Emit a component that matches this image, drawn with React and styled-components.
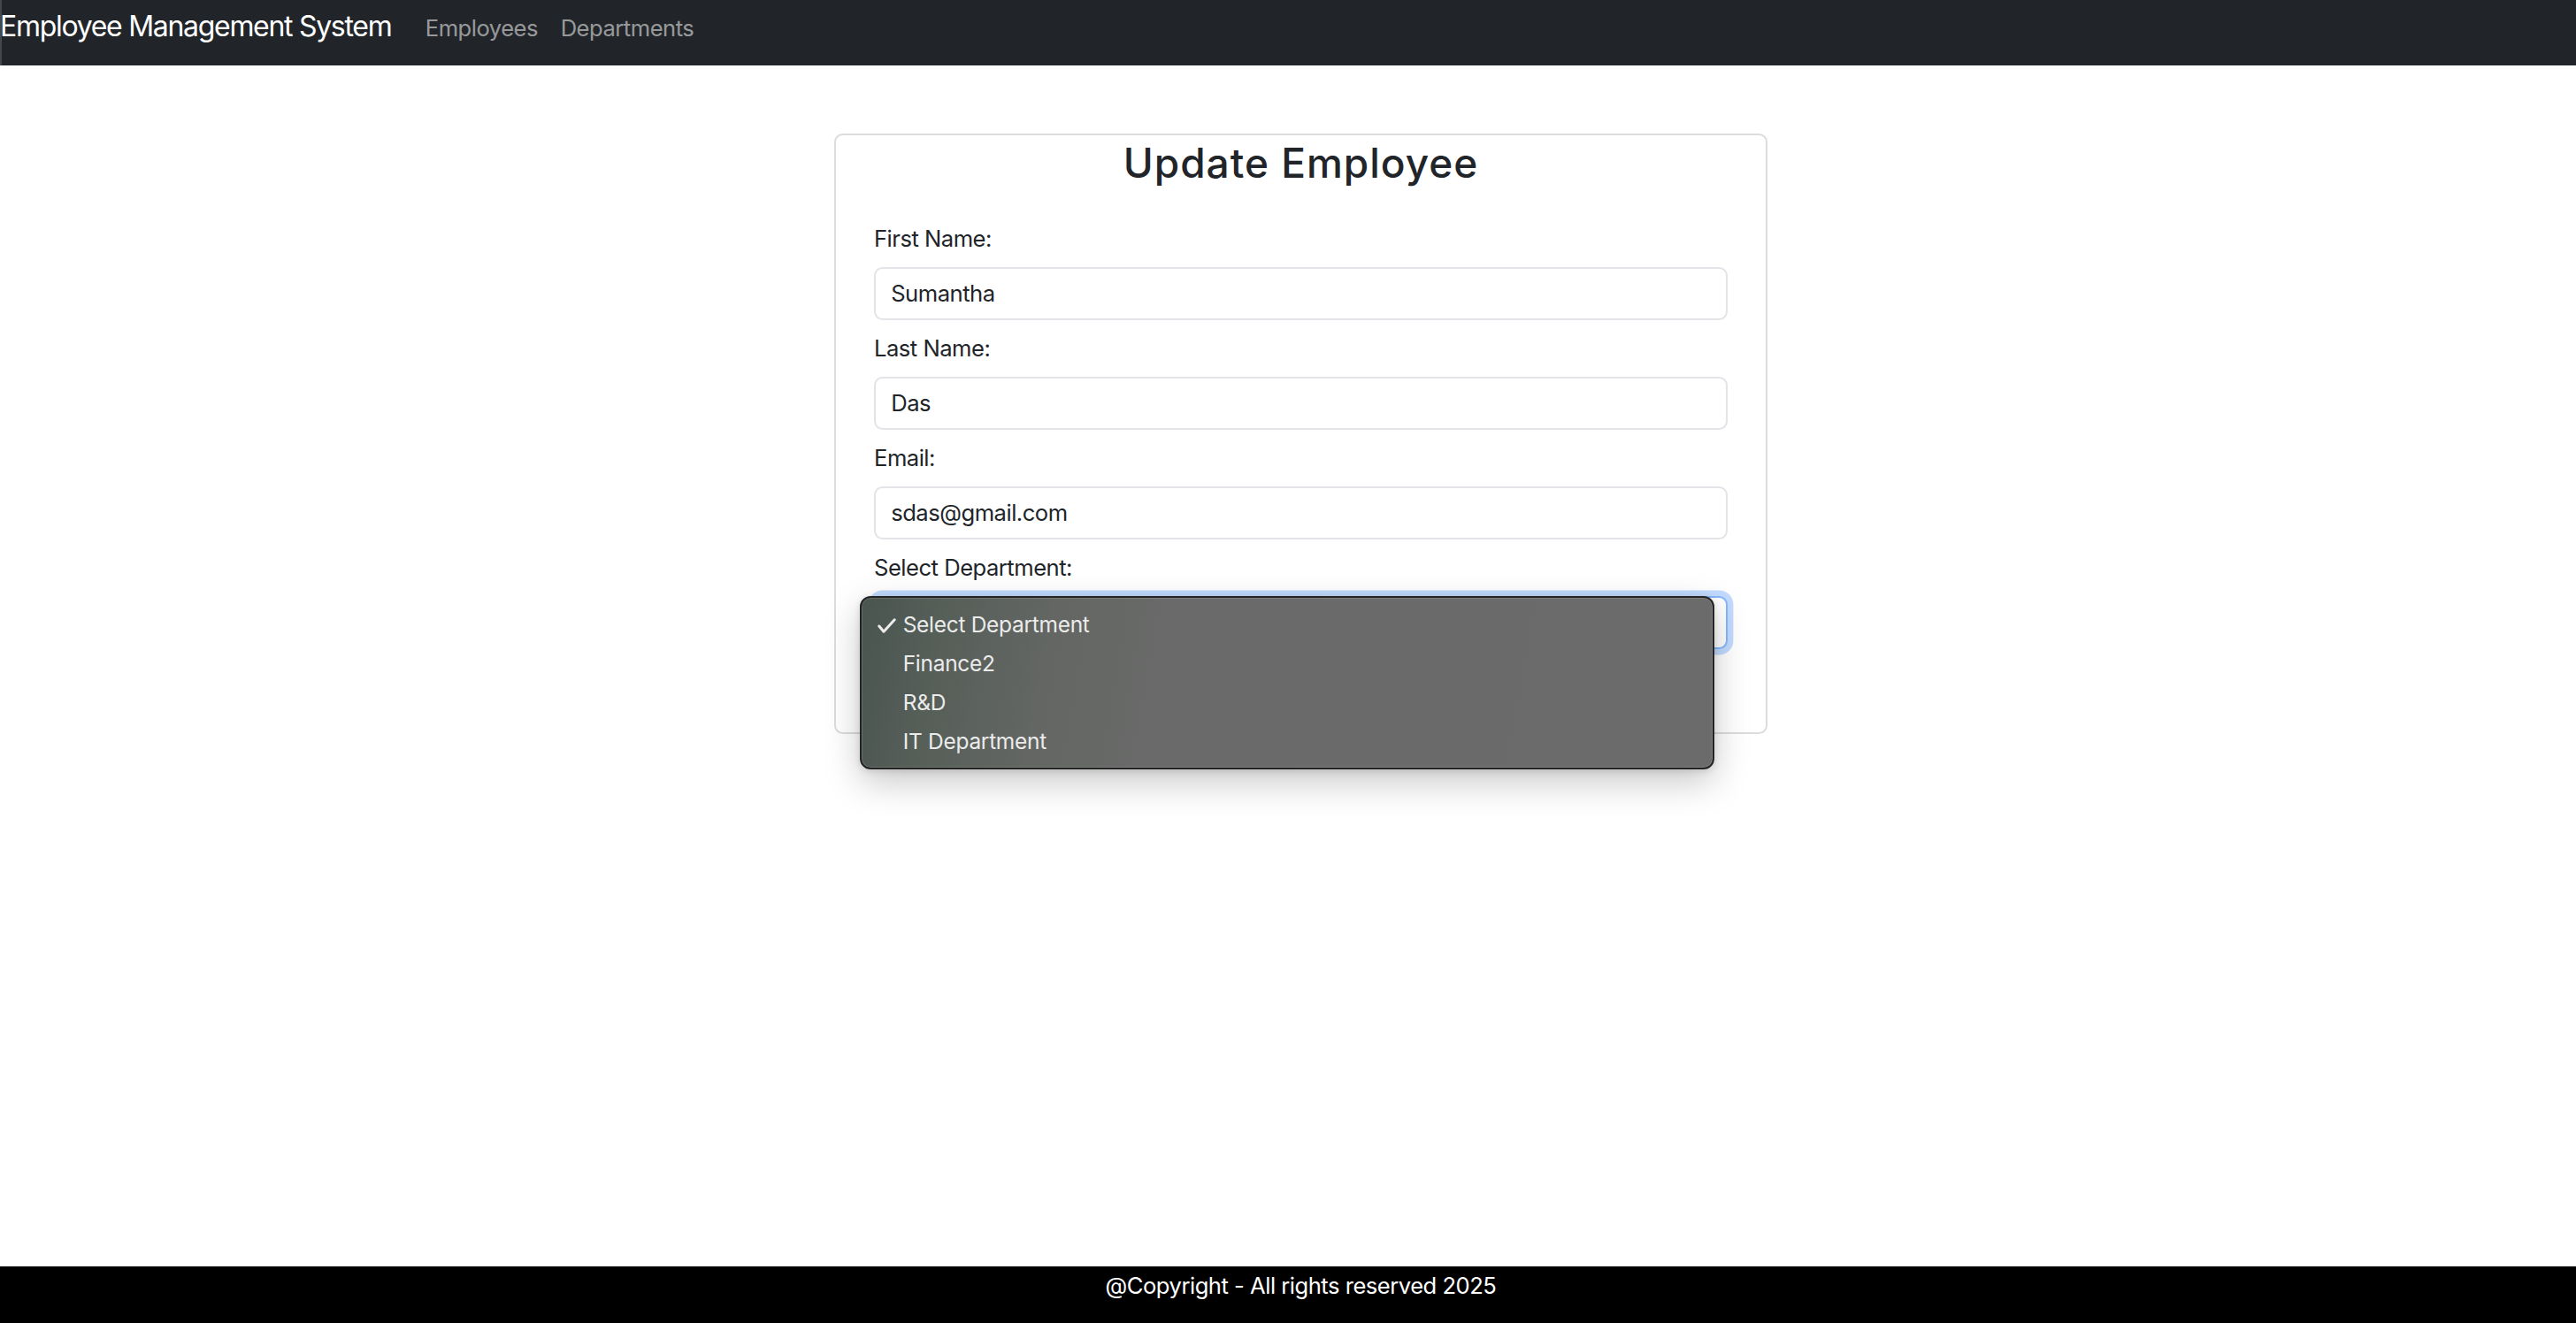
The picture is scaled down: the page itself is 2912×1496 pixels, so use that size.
import React from "react";
import styled, { createGlobalStyle } from "styled-components";

const GlobalStyle = createGlobalStyle`
  html, body {
    margin: 0;
    padding: 0;
    overflow-x: hidden;
  }
  body {
    font-family: Inter, "Noto Sans", "Liberation Sans", sans-serif;
    font-size: 25.6px;
    line-height: 1.5;
    letter-spacing: -0.5px;
    color: #212529;
    background: #fff;
  }
  * {
    box-sizing: border-box;
  }
`;

const Page = styled.div`
  display: flex;
  flex-direction: column;
  min-height: 100vh;
  width: calc(100% + 29px);
`;

const Navbar = styled.nav`
  display: flex;
  align-items: baseline;
  height: 74px;
  padding-top: 6px;
  background: #212529;
  box-shadow: inset 2px 0 0 #44474b;
`;

const Brand = styled.a`
  font-size: 32px;
  line-height: 48px;
  letter-spacing: -1.3px;
  color: #fff;
  text-decoration: none;
  margin-right: 25.6px;
`;

const NavItem = styled.a`
  font-size: 25.6px;
  line-height: 38.4px;
  padding: 0 12.8px;
  color: rgba(255, 255, 255, 0.55);
  text-decoration: none;
`;

const Main = styled.main`
  flex: 1;
  display: flex;
  justify-content: center;
  align-items: flex-start;
  padding-top: 76.8px;
`;

const Card = styled.div`
  width: 1055px;
  border: 2px solid #dcdcdc;
  border-radius: 9.6px;
  background: #fff;
`;

const Title = styled.h2`
  margin: 0 0 39.8px;
  padding-top: 4.8px;
  font-size: 46px;
  font-weight: 500;
  line-height: 53.76px;
  letter-spacing: 1px;
  text-align: center;
`;

const Form = styled.form`
  padding: 0 43px 94.6px;
`;

const Field = styled.div`
  margin-bottom: ${({ $last }) => ($last ? "0" : "13.6px")};
`;

const Label = styled.label`
  display: block;
  line-height: 38.4px;
  margin-bottom: 12px;
`;

const Input = styled.input`
  display: block;
  width: 100%;
  height: 60px;
  padding: 0 17.2px;
  font: inherit;
  font-size: 25.6px;
  letter-spacing: -0.5px;
  color: #212529;
  background: #fff;
  border: 2px solid #e2e4e7;
  border-radius: 9.6px;
  outline: none;
`;

const Select = styled.select`
  display: block;
  width: 100%;
  height: 60px;
  padding: 0 17.2px;
  font: inherit;
  font-size: 25.6px;
  color: #212529;
  background: #fff;
  border: 2px solid #86b7fe;
  border-radius: 9.6px;
  box-shadow: 0 0 0 6.4px rgba(13, 110, 253, 0.25);
  appearance: none;
  outline: none;
`;

const SelectWrap = styled.div`
  position: relative;
`;

const Popup = styled.ul`
  position: absolute;
  top: 0;
  left: -16.3px;
  width: 966px;
  height: 196px;
  margin: 0;
  padding: 8px 0;
  list-style: none;
  border: 2px solid #242424;
  border-radius: 12px;
  background: linear-gradient(
    100deg,
    #4a554f 0%,
    #575f59 10%,
    #636663 22%,
    #696a69 36%,
    #6b6b6b 100%
  );
  box-shadow: inset 0 0 0 1px rgba(255, 255, 255, 0.13),
    0 14px 40px rgba(0, 0, 0, 0.22), 0 2px 8px rgba(0, 0, 0, 0.12);
  z-index: 10;
`;

const Option = styled.li`
  display: flex;
  align-items: center;
  height: 44px;
  font-size: 24.5px;
  line-height: 44px;
  letter-spacing: -0.3px;
  color: #ebebeb;
`;

const CheckSlot = styled.span`
  display: flex;
  width: 47px;
  padding-left: 18px;
  margin-top: 3px;
`;

const Footer = styled.footer`
  height: 64px;
  padding-top: 3px;
  background: #000;
  color: #fff;
  text-align: center;
  line-height: 38.4px;
`;

const Check = () => (
  <svg width="21" height="17" viewBox="0 0 21 17">
    <polyline
      points="1.8,9 7,15.2 19.2,1.8"
      fill="none"
      stroke="#ececec"
      strokeWidth="3"
      strokeLinecap="round"
      strokeLinejoin="round"
    />
  </svg>
);

const departments = ["Select Department", "Finance2", "R&D", "IT Department"];

const fields = [
  { label: "First Name:", value: "Sumantha" },
  { label: "Last Name:", value: "Das" },
  { label: "Email:", value: "sdas@gmail.com" },
];

export default function App() {
  return (
    <>
      <GlobalStyle />
      <Page>
        <Navbar>
          <Brand href="#">Employee Management System</Brand>
          <NavItem href="#">Employees</NavItem>
          <NavItem href="#">Departments</NavItem>
        </Navbar>
        <Main>
          <Card>
            <Title>Update Employee</Title>
            <Form onSubmit={(e) => e.preventDefault()}>
              {fields.map((f) => (
                <Field key={f.label}>
                  <Label>{f.label}</Label>
                  <Input defaultValue={f.value} />
                </Field>
              ))}
              <Field $last>
                <Label>Select Department:</Label>
                <SelectWrap>
                  <Select defaultValue="">
                    <option value="">Select Department</option>
                    <option>Finance2</option>
                    <option>R&amp;D</option>
                    <option>IT Department</option>
                  </Select>
                  <Popup>
                    {departments.map((d, i) => (
                      <Option key={d}>
                        <CheckSlot>{i === 0 && <Check />}</CheckSlot>
                        {d}
                      </Option>
                    ))}
                  </Popup>
                </SelectWrap>
              </Field>
            </Form>
          </Card>
        </Main>
        <Footer>@Copyright - All rights reserved 2025</Footer>
      </Page>
    </>
  );
}
